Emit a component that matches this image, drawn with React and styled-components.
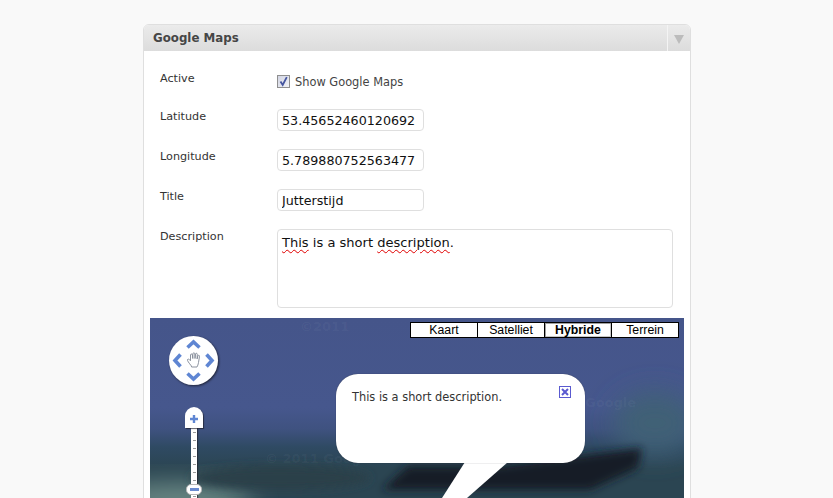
import React from "react";
import styled, { createGlobalStyle } from "styled-components";

const Global = createGlobalStyle`
  html, body { margin: 0; padding: 0; height: 498px; overflow: hidden; background: #f9f9f9; }
  body { font-family: "DejaVu Sans", Verdana, sans-serif; }
`;

const Page = styled.div`
  padding: 24px 0 0 143px;
  width: 548px;
`;

const Panel = styled.section`
  box-sizing: border-box;
  width: 548px;
  background: #fff;
  border: 1px solid #dfdfdf;
  border-radius: 6px 6px 0 0;
`;

const PanelHeader = styled.header`
  display: flex;
  align-items: stretch;
  height: 26px;
  background: linear-gradient(#ebebeb, #dcdcdc);
  border-radius: 5px 5px 0 0;
`;

const PanelTitle = styled.h3`
  flex: 1;
  margin: 0;
  padding-left: 9px;
  font-size: 11.8px;
  line-height: 27px;
  font-weight: 700;
  color: #464646;
`;

const Toggle = styled.div`
  box-sizing: border-box;
  width: 23px;
  border-left: 1px solid #f4f4f4;
  display: flex;
  justify-content: center;
  padding: 10px 1px 0 0;
`;

const Arrow = styled.span`
  width: 0;
  height: 0;
  border-left: 5px solid transparent;
  border-right: 5px solid transparent;
  border-top: 9px solid #bcbcbc;
`;

const Form = styled.div`
  display: grid;
  grid-template-columns: 117px 396px;
  row-gap: 18px;
  padding: 20px 0 10px 16px;
`;

const Label = styled.label`
  padding-top: 1px;
  font-size: 11.2px;
  line-height: 14px;
  color: #333;
`;

const CheckRow = styled.div`
  box-sizing: border-box;
  display: flex;
  align-items: center;
  height: 20px;
  gap: 5px;
  padding-top: 1px;
  font-size: 11.4px;
  color: #444;
`;

const CheckBox = styled.span`
  box-sizing: border-box;
  display: flex;
  width: 13px;
  height: 13px;
  margin-top: -1px;
  border: 1px solid #8f8f8f;
  background: linear-gradient(135deg, #d3d6e4, #f0f1f6);
`;

const TextInput = styled.input`
  box-sizing: border-box;
  display: block;
  width: 147px;
  height: 22px;
  padding: 0 4px;
  border: 1px solid #dfdfdf;
  border-radius: 4px;
  background: #fff;
  font-family: inherit;
  font-size: 12.7px;
  color: #111;
  outline: none;
`;

const TextArea = styled.div`
  box-sizing: border-box;
  width: 396px;
  height: 79px;
  padding: 4px;
  border: 1px solid #dfdfdf;
  border-radius: 4px;
  font-size: 13.05px;
  line-height: 17px;
  color: #111;
`;

const Misspelled = styled.span`
  text-decoration: underline wavy #e00000 1px;
  text-underline-offset: 2px;
`;

const MapCanvas = styled.div`
  position: relative;
  width: 534px;
  height: 300px;
  margin-left: 6px;
  overflow: hidden;
  background: #46578c;
`;

const Backdrop = styled.svg`
  position: absolute;
  inset: 0;
`;

const Ghost = styled.span`
  position: absolute;
  left: ${(p) => p.$x}px;
  top: ${(p) => p.$y}px;
  font-size: 13px;
  font-weight: 700;
  line-height: 15px;
  color: rgba(255, 255, 255, 0.045);
  white-space: nowrap;
`;

const MapTypes = styled.div`
  position: absolute;
  top: 4px;
  right: 5px;
  display: flex;
  border: 1px solid #000;
  border-width: 1px 0 1px 1px;
`;

const MapType = styled.div`
  box-sizing: border-box;
  width: 67px;
  height: 14px;
  background: #fff;
  border-right: 1px solid #000;
  font-family: "Liberation Sans", Arial, sans-serif;
  font-size: 12.3px;
  line-height: 14px;
  text-align: center;
  color: #000;
  font-weight: ${(p) => (p.$active ? 700 : 400)};
  box-shadow: ${(p) => (p.$active ? "inset 1px 1px 0 #a0a0a0, inset -1px -1px 0 #c8c8c8" : "none")};
`;

const NavPad = styled.svg`
  position: absolute;
  left: 18px;
  top: 17px;
  filter: drop-shadow(1px 1px 1px rgba(20, 20, 30, 0.75));
`;

const ZoomPlus = styled.div`
  position: absolute;
  left: 35px;
  top: 89px;
  box-sizing: border-box;
  width: 18px;
  height: 21px;
  background: #fff;
  border-radius: 9px 9px 0 0;
  box-shadow: 1px 1px 1px rgba(30, 30, 40, 0.7);
  display: flex;
  align-items: center;
  justify-content: center;
  padding-top: 2px;
`;

const ZoomRail = styled.div`
  position: absolute;
  left: 41px;
  top: 110px;
  width: 6px;
  height: 190px;
  background-color: #fff;
  background-image: repeating-linear-gradient(
    to bottom,
    #fff 0 4px,
    #9a9a9a 4px 5px,
    #fff 5px 8px
  );
  background-size: 3px 100%;
  background-repeat: no-repeat;
  background-position: center;
  box-shadow: 1px 0 1px rgba(30, 30, 40, 0.6);
`;

const ZoomThumb = styled.div`
  position: absolute;
  left: 36px;
  top: 166px;
  box-sizing: border-box;
  width: 16px;
  height: 11px;
  background: #fff;
  border: 1px solid #b5b5b5;
  border-radius: 5px;
  display: flex;
  align-items: center;
  justify-content: center;
`;

const ThumbBar = styled.span`
  width: 9px;
  height: 3px;
  background: #6a8bd0;
`;

const Balloon = styled.div`
  position: absolute;
  left: 186px;
  top: 56px;
  box-sizing: border-box;
  width: 249px;
  height: 89px;
  padding: 16px 16px;
  background: #fff;
  border-radius: 22px;
  box-shadow: 0 0 1px rgba(40, 40, 50, 0.7);
  font-size: 11.4px;
  line-height: 14px;
  color: #333;
`;

const BalloonClose = styled.svg`
  position: absolute;
  top: 12px;
  right: 14px;
`;

const BalloonTail = styled.div`
  position: absolute;
  left: 292px;
  top: 144px;
  width: 70px;
  height: 40px;
  background: #fff;
  clip-path: polygon(23px 0, 66px 0, 25px 36px, 0 36px, 0 36px);
`;

const Hand = () => (
  <path
    d="M19.5 29 C17.5 26.5 15.5 24 16 23 C16.6 22 18 23 19 24.2 L19 18.5 C19 17.2 20.8 17.2 20.9 18.5 L21.3 22 L21.4 17.2 C21.5 16 23.2 16 23.3 17.2 L23.5 22 L24 17.6 C24.2 16.4 25.8 16.6 25.8 17.8 L25.6 22.4 L26.4 19.4 C26.8 18.3 28.2 18.7 28 19.9 L27 26 C26.7 28 26 29.5 25.5 30.5 L20.5 30.5 Z"
    transform="translate(3.5 1.5)"
    fill="#fff"
    stroke="#7f8794"
    strokeWidth="0.9"
    strokeLinecap="round"
    strokeLinejoin="round"
  />
);

const Chevron = ({ d }) => (
  <path d={d} fill="none" stroke="#5f86d3" strokeWidth="3.6" strokeLinejoin="miter" />
);

const App = () => (
  <>
    <Global />
    <Page>
      <Panel>
        <PanelHeader>
          <PanelTitle>Google Maps</PanelTitle>
          <Toggle>
            <Arrow />
          </Toggle>
        </PanelHeader>
        <Form>
          <Label>Active</Label>
          <CheckRow>
            <CheckBox>
              <svg width="11" height="11" viewBox="0 0 11 11">
                <path d="M2.5 5.5 L4.7 9 L8.8 1.2" fill="none" stroke="#45559f" strokeWidth="1.8" />
              </svg>
            </CheckBox>
            Show Google Maps
          </CheckRow>
          <Label>Latitude</Label>
          <TextInput readOnly value="53.45652460120692" />
          <Label>Longitude</Label>
          <TextInput readOnly value="5.789880752563477" />
          <Label>Title</Label>
          <TextInput readOnly value="Jutterstijd" />
          <Label>Description</Label>
          <TextArea>
            <Misspelled>This</Misspelled> is a short <Misspelled>description</Misspelled>.
          </TextArea>
        </Form>
        <MapCanvas>
          <Backdrop width="534" height="300" viewBox="0 0 534 300">
            <defs>
              <linearGradient id="sky" x1="0" y1="0" x2="0" y2="1">
                <stop offset="0" stopColor="#45558a" />
                <stop offset="0.3" stopColor="#46578d" />
                <stop offset="0.37" stopColor="#3f5280" />
                <stop offset="0.43" stopColor="#2f4a63" />
                <stop offset="0.5" stopColor="#2b4552" />
                <stop offset="0.6" stopColor="#2b4552" />
              </linearGradient>
              <filter id="soft" x="-30%" y="-60%" width="160%" height="220%">
                <feGaussianBlur stdDeviation="4" />
              </filter>
              <filter id="softer" x="-30%" y="-60%" width="160%" height="220%">
                <feGaussianBlur stdDeviation="13" />
              </filter>
            </defs>
            <rect width="534" height="300" fill="url(#sky)" />
            <ellipse cx="30" cy="182" rx="75" ry="16" fill="#6f8e88" filter="url(#softer)" />
            <ellipse cx="130" cy="160" rx="90" ry="12" fill="#2c4048" filter="url(#soft)" />
            <ellipse cx="505" cy="105" rx="42" ry="32" fill="#3f6176" filter="url(#softer)" />
            <path d="M232 172 L258 148 L350 148 L492 130 L488 150 L440 172 Z" fill="#141e27" filter="url(#soft)" />
          </Backdrop>
          <Ghost $x={115} $y={133}>© 2011 Google</Ghost>
          <Ghost $x={435} $y={77}>Google</Ghost>
          <Ghost $x={150} $y={1}>©2011</Ghost>
          <MapTypes>
            <MapType>Kaart</MapType>
            <MapType>Satelliet</MapType>
            <MapType $active>Hybride</MapType>
            <MapType>Terrein</MapType>
          </MapTypes>
          <NavPad width="52" height="52" viewBox="0 0 52 52">
            <circle cx="25.5" cy="25.5" r="24.5" fill="#fff" />
            <Chevron d="M19.5 12.5 L25.5 7 L31.5 12.5" />
            <Chevron d="M19.5 38.5 L25.5 44 L31.5 38.5" />
            <Chevron d="M12.5 19.5 L7 25.5 L12.5 31.5" />
            <Chevron d="M38.5 19.5 L44 25.5 L38.5 31.5" />
            <Hand />
          </NavPad>
          <ZoomRail />
          <ZoomPlus>
            <svg width="10" height="10" viewBox="0 0 10 10">
              <path d="M5 1 V9 M1 5 H9" stroke="#5f86d3" strokeWidth="2.4" />
            </svg>
          </ZoomPlus>
          <ZoomThumb>
            <ThumbBar />
          </ZoomThumb>
          <BalloonTail />
          <Balloon>
            This is a short description.
            <BalloonClose width="12" height="12" viewBox="0 0 12 12">
              <rect x="0.5" y="0.5" width="11" height="11" fill="#fff" stroke="#5a5ad0" />
              <path d="M3 3 L9 9 M9 3 L3 9" stroke="#5a5ad0" strokeWidth="2" />
            </BalloonClose>
          </Balloon>
        </MapCanvas>
      </Panel>
    </Page>
  </>
);

export default App;
